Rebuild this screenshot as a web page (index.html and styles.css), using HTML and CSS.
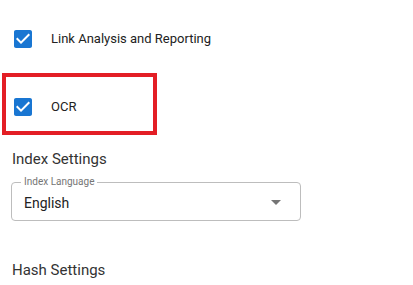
FILE: index.html
```html
<!DOCTYPE html>
<html lang="en">
<head>
  <meta charset="UTF-8">
  <title>Settings</title>
  <link rel="stylesheet" href="styles.css">
</head>
<body>
  <div class="opcion">
    <svg class="check" viewBox="0 0 24 24" width="24" height="24"><path d="M19 3H5c-1.11 0-2 .9-2 2v14c0 1.1.89 2 2 2h14c1.11 0 2-.9 2-2V5c0-1.1-.89-2-2-2zm-9 14l-5-5 1.41-1.41L10 14.17l7.59-7.59L19 8l-9 9z"/></svg>
    <span>Link Analysis and Reporting</span>
  </div>

  <div class="resaltado">
    <div class="opcion">
      <svg class="check" viewBox="0 0 24 24" width="24" height="24"><path d="M19 3H5c-1.11 0-2 .9-2 2v14c0 1.1.89 2 2 2h14c1.11 0 2-.9 2-2V5c0-1.1-.89-2-2-2zm-9 14l-5-5 1.41-1.41L10 14.17l7.59-7.59L19 8l-9 9z"/></svg>
      <span>OCR</span>
    </div>
  </div>

  <h3 class="titulo">Index Settings</h3>

  <div class="campo">
    <label>Index Language</label>
    <span class="valor">English</span>
    <span class="flecha"></span>
  </div>

  <h3 class="titulo hash">Hash Settings</h3>
</body>
</html>
```

FILE: styles.css
```css
body {
  margin: 0;
  font-family: Roboto, "Liberation Sans", sans-serif;
  color: #333;
  background: #fff;
}

.opcion {
  display: flex;
  align-items: center;
  height: 24px;
  padding-left: 11px;
  margin-top: 27px;
  font-size: 13px;
  font-weight: 400;
}
.opcion .check { fill: #1976d2; margin-right: 16px; }
.opcion span { color: #222; margin-bottom: 2px; }

.resaltado {
  width: 147px;
  height: 54px;
  margin: 22px 0 0 2px;
  border: 4px solid #e31e25;
}
.resaltado .opcion { margin-top: 18px; padding-left: 5px; }

.titulo {
  margin: 15px 0 0 12px;
  font-size: 15px;
  font-weight: 400;
  color: #333;
}

.campo {
  position: relative;
  display: flex;
  align-items: center;
  width: 288px;
  height: 37px;
  margin: 14px 0 0 11px;
  border: 1px solid #bdbdbd;
  border-radius: 4px;
}
.campo label {
  position: absolute;
  top: -7px;
  left: 9px;
  padding: 0 3px;
  background: #fff;
  font-size: 10px;
  color: #757575;
}
.campo .valor {
  margin: 2px 0 0 12px;
  font-size: 14px;
  color: #222;
  flex: 1;
}
.campo .flecha {
  width: 0;
  height: 0;
  margin: 2px 19px 0 0;
  border-left: 5px solid transparent;
  border-right: 5px solid transparent;
  border-top: 5px solid #757575;
}

.hash { margin-top: 40px; }
```
